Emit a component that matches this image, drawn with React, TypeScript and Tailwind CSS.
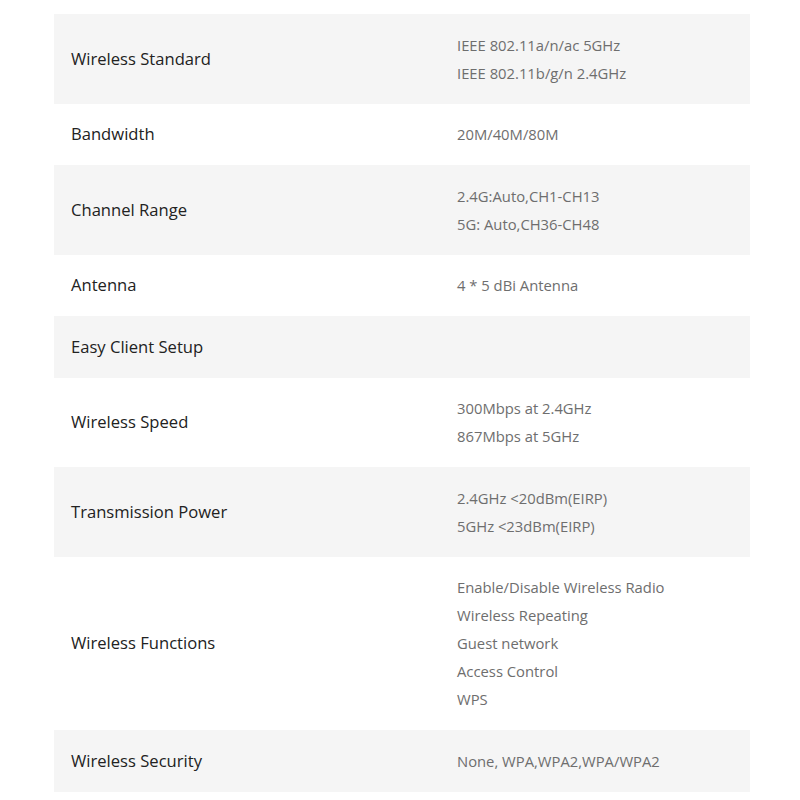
const specs: { label: string; values: string[] }[] = [
  { label: "Wireless Standard", values: ["IEEE 802.11a/n/ac 5GHz", "IEEE 802.11b/g/n 2.4GHz"] },
  { label: "Bandwidth", values: ["20M/40M/80M"] },
  { label: "Channel Range", values: ["2.4G:Auto,CH1-CH13", "5G: Auto,CH36-CH48"] },
  { label: "Antenna", values: ["4 * 5 dBi Antenna"] },
  { label: "Easy Client Setup", values: [""] },
  { label: "Wireless Speed", values: ["300Mbps at 2.4GHz", "867Mbps at 5GHz"] },
  { label: "Transmission Power", values: ["2.4GHz <20dBm(EIRP)", "5GHz <23dBm(EIRP)"] },
  {
    label: "Wireless Functions",
    values: [
      "Enable/Disable Wireless Radio",
      "Wireless Repeating",
      "Guest network",
      "Access Control",
      "WPS",
    ],
  },
  { label: "Wireless Security", values: ["None, WPA,WPA2,WPA/WPA2"] },
];

export default function App() {
  return (
    <main className="min-h-screen bg-white pt-[14px] px-[54px] font-['Open_Sans',sans-serif]">
      <div className="w-[696px] flex flex-col">
        {specs.map((row, i) => (
          <div
            key={row.label}
            className={`flex items-center py-[16.75px] ${i % 2 === 0 ? "bg-[#f5f5f5]" : "bg-white"}`}
          >
            <div className="w-[386px] pl-[17px] text-[16.6px] leading-[28px] text-[#222]">{row.label}</div>
            <div className="flex-1 pl-[17px] flex flex-col">
              {row.values.map((v, j) => (
                <div key={j} className="h-[28px] leading-[28px] text-[14.8px] text-[#6e6e6e]">
                  {v}
                </div>
              ))}
            </div>
          </div>
        ))}
      </div>
    </main>
  );
}
